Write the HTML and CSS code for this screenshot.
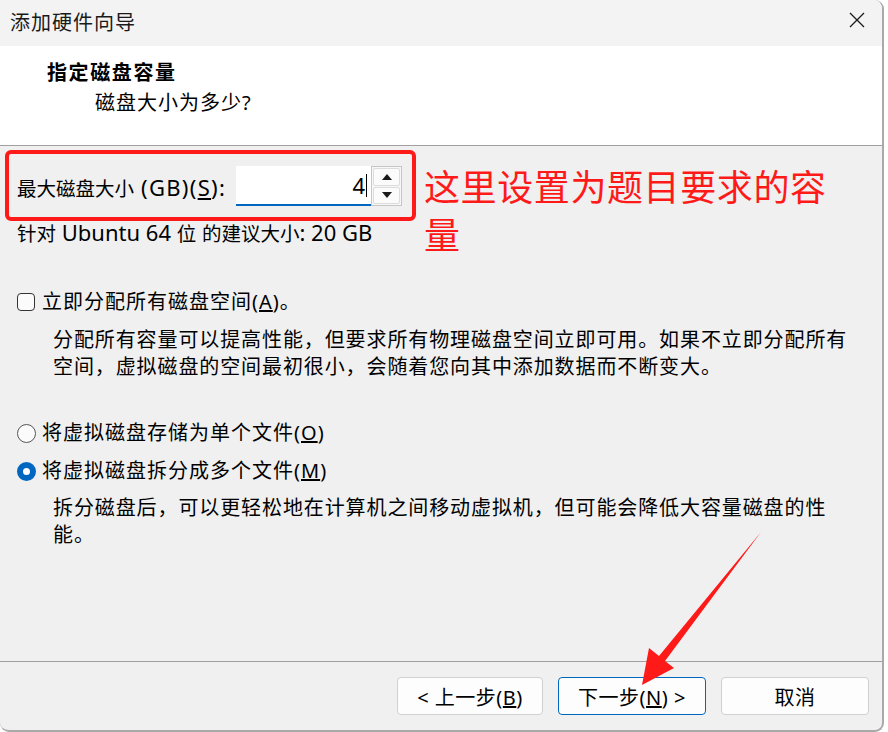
FILE: index.html
```html
<!DOCTYPE html>
<html>
<head>
    <title>添加硬件向导</title>
    <link rel="stylesheet" href="styles.css">
</head>
<body>

<div class="window">

    <div class="titlebar">
        <span class="titlebar__text">添加硬件向导</span>
        <svg class="titlebar__close" width="18" height="18" viewBox="0 0 18 18">
            <path d="M2 2 L16 16 M16 2 L2 16" stroke="#1a1a1a" stroke-width="1.3" fill="none"/>
        </svg>
    </div>

    <div class="header">
        <div class="header__title">指定磁盘容量</div>
        <div class="header__sub">磁盘大小为多少?</div>
    </div>

    <div class="content">

        <div class="sizeRow">
            <label class="sizeRow__label">最大磁盘大小<span class="latin latin--wide"> (GB)(<u>S</u>):</span></label>
            <div class="sizeInput">
                <span class="sizeInput__value">4</span><span class="sizeInput__caret"></span>
            </div>
            <div class="spinner">
                <div class="spinner__btn"><span class="tri tri--up"></span></div>
                <div class="spinner__btn"><span class="tri tri--down"></span></div>
            </div>
        </div>

        <div class="hint">针对<span class="latin"> Ubuntu 64 </span>位<span class="latin"> </span>的建议大小<span class="latin">: 20 GB</span></div>

        <div class="option option--check">
            <span class="checkbox"></span>
            <span>立即分配所有磁盘空间(<u>A</u>)。</span>
        </div>
        <p class="desc">分配所有容量可以提高性能，但要求所有物理磁盘空间立即可用。如果不立即分配所有空间，虚拟磁盘的空间最初很小，会随着您向其中添加数据而不断变大。</p>

        <div class="option option--first">
            <span class="radio"></span>
            <span>将虚拟磁盘存储为单个文件(<u>O</u>)</span>
        </div>
        <div class="option option--next">
            <span class="radio radio--on"></span>
            <span>将虚拟磁盘拆分成多个文件(<u>M</u>)</span>
        </div>
        <p class="desc desc--tight">拆分磁盘后，可以更轻松地在计算机之间移动虚拟机，但可能会降低大容量磁盘的性能。</p>

    </div>

    <div class="footer">
        <button class="btn">&lt; 上一步(<u>B</u>)</button>
        <button class="btn btn--default">下一步(<u>N</u>) &gt;</button>
        <button class="btn">取消</button>
    </div>

    <!-- annotations drawn on top of the dialog -->
    <div class="mark"></div>
    <div class="note">这里设置为题目要求的容量</div>
    <svg class="arrow" width="888" height="732" viewBox="0 0 888 732">
        <polygon points="761,532 665,661 674,668 642,685 649,648 659,656" fill="#ff1a1a"/>
    </svg>

</div>

</body>
</html>
```

FILE: styles.css
```css
body {
    margin: 0;
    background: #ffffff;
    font-family: "Noto Sans", "Noto Sans CJK SC", sans-serif;
    color: #000;
    overflow: hidden;
}

.window {
    position: relative;
    width: 884px;
    height: 732px;
    box-sizing: border-box;
    display: flex;
    flex-direction: column;
    background: #f0f0f0;
    border-right: 2px solid #a9a9a9;
    border-bottom: 2px solid #a9a9a9;
    border-radius: 0 9px 9px 9px;
    overflow: hidden;
}

/*---------Title bar-------------*/
.titlebar {
    height: 46px;
    flex-shrink: 0;
    display: flex;
    align-items: center;
    justify-content: space-between;
    padding: 0 16px 0 10px;
    background: #f3f3f3;
}
.titlebar__text {
    font-size: 20px;
    letter-spacing: 1px;
    color: #1a1a1a;
    margin-top: -4px;
}
.titlebar__close { margin-top: -6px; }

/*---------Header-------------*/
.header {
    height: 100px;
    flex-shrink: 0;
    box-sizing: border-box;
    padding-top: 12px;
    background: #fff;
    border-bottom: 1px solid #a0a0a0;
    font-size: 20px;
    line-height: 30px;
}
.header__title {
    padding-left: 47px;
    font-weight: bold;
    letter-spacing: 1.6px;
}
.header__sub {
    padding-left: 95px;
    letter-spacing: 1px;
}

/*---------Content-------------*/
.content {
    flex: 1;
    padding: 20px 0 0 17px;
    font-size: 19.5px;
    line-height: 30px;
}

.latin { font-size: 22px; }
.latin--wide { letter-spacing: 1.3px; }

.sizeRow {
    display: flex;
    align-items: center;
    height: 40px;
}
.sizeRow__label {
    width: 219px;
    margin-top: 4px;
    white-space: nowrap;
}
.sizeInput {
    width: 135px;
    height: 40px;
    box-sizing: border-box;
    background: #fff;
    border-bottom: 2px solid #0067c0;
    display: flex;
    align-items: center;
    justify-content: flex-end;
    padding-right: 4px;
}
.sizeInput__value { font-size: 22px; }
.sizeInput__caret {
    width: 1px;
    height: 23px;
    background: #000;
    margin-left: 1px;
}
.spinner {
    width: 31px;
    height: 40px;
    box-sizing: border-box;
    border: 1px solid #c6c6c6;
    background: #f7f7f7;
    display: flex;
    flex-direction: column;
    padding: 1px;
    gap: 1px;
}
.spinner__btn {
    flex: 1;
    border: 1px solid #dcdcdc;
    border-radius: 2px;
    background: #fbfbfb;
    display: flex;
    align-items: center;
    justify-content: center;
}
.tri {
    width: 0;
    height: 0;
    border-left: 5px solid transparent;
    border-right: 5px solid transparent;
}
.tri--up { border-bottom: 6px solid #1a1a1a; }
.tri--down { border-top: 6px solid #1a1a1a; }

.hint {
    margin-top: 11px;
    white-space: nowrap;
}

.option {
    display: flex;
    align-items: center;
    font-size: 20px;
    letter-spacing: 1px;
}
.option--check { margin-top: 38px; }
.option--first { margin-top: 38px; }
.option--next { margin-top: 8px; }

.checkbox {
    width: 18px;
    height: 18px;
    box-sizing: border-box;
    border: 1px solid #333;
    border-radius: 4px;
    background: #fbfbfb;
    margin-right: 7px;
}
.radio {
    width: 19px;
    height: 19px;
    box-sizing: border-box;
    border: 1px solid #555;
    border-radius: 50%;
    background: #fbfbfb;
    margin-right: 6px;
}
.radio--on {
    border: 6px solid #0067c0;
    background: #fff;
}

.desc {
    margin: 9px 0 0 36px;
    width: 806px;
    font-size: 20px;
    line-height: 27px;
    letter-spacing: 0.9px;
}
.desc--tight { margin-top: 8px; }

/*---------Footer-------------*/
.footer {
    height: 69px;
    flex-shrink: 0;
    box-sizing: border-box;
    border-top: 1px solid #a0a0a0;
    display: flex;
    justify-content: flex-end;
    align-items: flex-start;
    gap: 15px;
    padding: 15px 13px 0 0;
}
.btn {
    width: 148px;
    height: 38px;
    background: #fdfdfd;
    border: 1px solid #d0d0d0;
    border-radius: 4px;
    font-family: "Noto Sans", "Noto Sans CJK SC", sans-serif;
    font-size: 20px;
    color: #000;
    padding: 0;
    letter-spacing: 0.5px;
}
.btn:first-child { width: 146px; }
.btn--default { border-color: #0067c0; }

/*---------Annotations-------------*/
.mark {
    position: absolute;
    left: 5px;
    top: 150px;
    width: 411px;
    height: 71px;
    box-sizing: border-box;
    border: 4px solid #ff1a1a;
    border-radius: 6px;
}
.note {
    position: absolute;
    left: 424px;
    top: 161px;
    width: 420px;
    font-family: "Noto Sans CJK SC", sans-serif;
    font-size: 36px;
    line-height: 48px;
    letter-spacing: 0.6px;
    color: #ff1a1a;
}
.arrow {
    position: absolute;
    left: 0;
    top: 0;
    pointer-events: none;
}
```
